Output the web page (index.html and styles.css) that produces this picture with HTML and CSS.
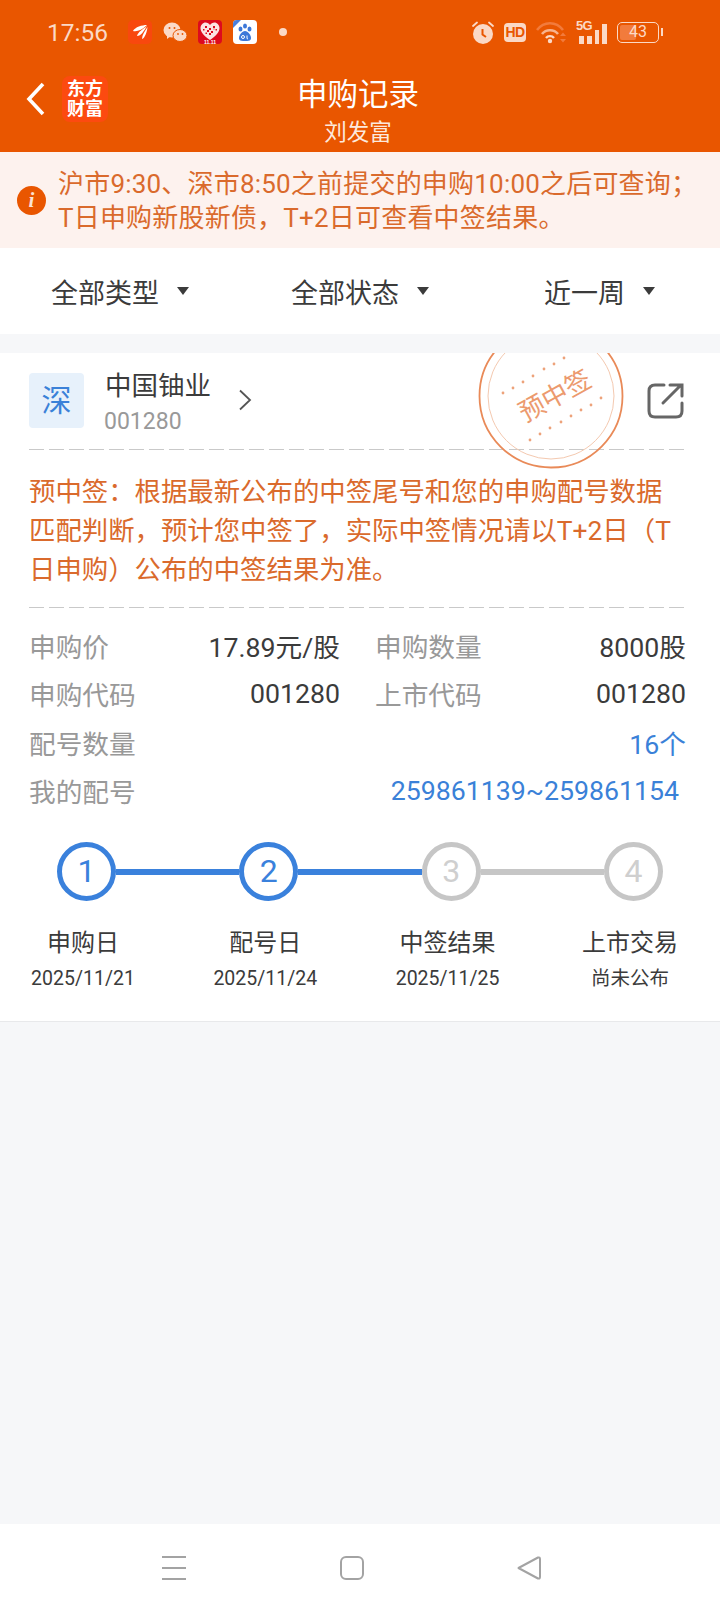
FILE: index.html

```html
<!DOCTYPE html>
<html lang="zh-CN">
<head>
  <meta charset="UTF-8" />
  <meta name="viewport" content="width=device-width, initial-scale=1.0"/>
  <title>申购记录</title>
  <link rel="stylesheet" href="styles.css">
</head>
<body>

  <header class="top">
    <div class="status">
      <span class="time">17:56</span>
      <div class="app-icons">
        <svg class="app" width="24" height="24" viewBox="0 0 24 24">
          <rect width="24" height="24" rx="5" fill="#f8480e"/>
          <path d="M19 5 C14 5 7 7 5 11 C9 12 14 10 19 5Z" fill="#fff"/>
          <path d="M19 6 C15 9 10 12 9 16 C13 16 16 11 19 6Z" fill="#fff"/>
          <path d="M19.500 7 C17 11 14 15 14 19 C17 18 19 12 19.500 7Z" fill="#fff"/>
        </svg>
        <svg class="app" width="24" height="24" viewBox="0 0 24 24">
          <ellipse cx="9" cy="10" rx="8.500" ry="7.500" fill="#fbd9c6"/>
          <path d="M4 15 L4 19 L8 16Z" fill="#fbd9c6"/>
          <ellipse cx="17" cy="15.500" rx="7" ry="6" fill="#fbd9c6" stroke="#e95600" stroke-width="1"/>
          <circle cx="6.500" cy="8" r="1" fill="#e95600"/>
          <circle cx="11.500" cy="8" r="1" fill="#e95600"/>
          <circle cx="15" cy="14" r=".9" fill="#e95600"/>
          <circle cx="19.500" cy="14" r=".9" fill="#e95600"/>
        </svg>
        <svg class="app" width="24" height="24" viewBox="0 0 24 24">
          <rect width="24" height="24" rx="4" fill="#dd0a1e"/>
          <path d="M12 20 C6 16 2.500 12 2.500 8 C2.500 5 5 2.500 7.500 2.500 C9.500 2.500 11 3.500 12 5 C13 3.500 14.500 2.500 16.500 2.500 C19 2.500 21.500 5 21.500 8 C21.500 12 18 16 12 20Z" fill="#fbe3e3"/>
          <path d="M7 6h2v2H7z M11 8h2v2h-2z M15 6h2v2h-2z M9 10h2v2H9z M13 11h2v2h-2z M5 9h1.500v1.500H5z M17.500 9H19v1.500h-1.500z M11 13h2v2h-2z M15.500 8.500h1v1h-1z M7.500 12.500h1.500V14H7.500z" fill="#dd0a1e"/>
          <text x="12" y="23.500" text-anchor="middle" class="heart-text">11.11</text>
        </svg>
        <svg class="app" width="24" height="24" viewBox="0 0 24 24">
          <rect width="24" height="24" rx="4" fill="#fff"/>
          <path d="M0 8 L0 4 Q0 0 4 0 L8 0Z" fill="#4a7fdc"/>
          <ellipse cx="7.500" cy="9" rx="2" ry="2.600" fill="#3d78d8"/>
          <ellipse cx="12" cy="6" rx="2" ry="2.600" fill="#3d78d8"/>
          <ellipse cx="16.500" cy="9" rx="2" ry="2.600" fill="#3d78d8"/>
          <path d="M12 11 C9 11 6 15 6 18 C6 21 9 21 12 21 C15 21 18 21 18 18 C18 15 15 11 12 11Z" fill="#3d78d8"/>
          <circle cx="10" cy="17" r="1.500" fill="none" stroke="#fff" stroke-width="1"/>
          <path d="M14 15.500v2.500q0 1 1 1" fill="none" stroke="#fff" stroke-width="1"/>
        </svg>
        <span class="dot"></span>
      </div>
      <div class="sys-icons">
        <svg width="22" height="23" viewBox="0 0 22 23">
          <circle cx="11" cy="13" r="10" fill="#fbd9c6"/>
          <path d="M1 5 L5 1.500 M21 5 L17 1.500" stroke="#fbd9c6" stroke-width="1.800" stroke-linecap="round"/>
          <path d="M10.500 8 V13.500 L14 16" stroke="#e95600" stroke-width="2" fill="none"/>
        </svg>
        <span class="hd">HD</span>
        <svg width="30" height="23" viewBox="0 0 30 23">
          <path d="M1 9 C8 0 20 0 27 9" stroke="#f27b3c" stroke-width="2.600" fill="none"/>
          <path d="M6 13 C10 8 18 8 22 13" stroke="#f8b48e" stroke-width="2.600" fill="none"/>
          <path d="M10 17 C12 14.500 16 14.500 18 17" stroke="#fbd9c6" stroke-width="2.400" fill="none"/>
          <circle cx="14" cy="20" r="2.200" fill="#fbd9c6"/>
          <path d="M24 15 L27 11.500 L30 15Z M24 18 L27 21.500 L30 18Z" fill="#f27b3c"/>
        </svg>
        <div class="signal">
          <span class="tag-5g">5G</span>
          <span class="bar b1"></span><span class="bar b2"></span><span class="bar b3"></span><span class="bar b4"></span>
        </div>
        <div class="battery"><span class="battery-fill"></span><span class="battery-num">43</span></div>
      </div>
    </div>
    <div class="titlebar">
      <div class="title-left">
        <svg width="20" height="34" viewBox="0 0 20 34" class="back">
          <path d="M17 2 L3 17 L17 32" fill="none" stroke="#fff" stroke-width="3.600"/>
        </svg>
        <div class="logo"><span>东方</span><span>财富</span></div>
      </div>
      <div class="title-mid">
        <div class="title">申购记录</div>
        <div class="subtitle">刘发富</div>
      </div>
    </div>
  </header>

  <div class="notice">
    <span class="notice-icon">i</span>
    <p>沪市9:30、深市8:50之前提交的申购10:00之后可查询；<br>T日申购新股新债，T+2日可查看中签结果。</p>
  </div>

  <div class="filters">
    <div class="filter">全部类型<i class="caret"></i></div>
    <div class="filter">全部状态<i class="caret"></i></div>
    <div class="filter">近一周<i class="caret"></i></div>
  </div>

  <section class="card">
    <svg class="stamp" width="150" height="150" viewBox="0 0 150 150">
      <circle cx="75" cy="75" r="71.500" fill="none" stroke="#e98a58" stroke-width="1.800"/>
      <circle cx="75" cy="75" r="63" fill="none" stroke="#f4c9b0" stroke-width="1"/>
      <g fill="#eda27a">
        <circle cx="27" cy="72" r="1.400"/><circle cx="37" cy="67" r="1.400"/><circle cx="47" cy="61" r="1.400"/>
        <circle cx="57" cy="55" r="1.400"/><circle cx="68" cy="48" r="1.400"/><circle cx="78" cy="43" r="1.400"/>
        <circle cx="88" cy="37" r="1.400"/>
        <circle cx="54" cy="119" r="1.400"/><circle cx="64" cy="113" r="1.400"/><circle cx="74" cy="107" r="1.400"/>
        <circle cx="85" cy="101" r="1.400"/><circle cx="95" cy="95" r="1.400"/><circle cx="105" cy="89" r="1.400"/>
        <circle cx="115" cy="84" r="1.400"/><circle cx="125" cy="77" r="1.400"/>
      </g>
      <text x="79" y="84" text-anchor="middle" transform="rotate(-29 79 75)" class="stamp-text">预中签</text>
    </svg>

    <div class="stock">
      <span class="market">深</span>
      <div class="stock-name">
        <div class="name">中国铀业</div>
        <div class="code">001280</div>
      </div>
      <svg class="chev" width="14" height="22" viewBox="0 0 14 22">
        <path d="M2 1.500 L12 11 L2 20.500" fill="none" stroke="#555" stroke-width="1.800"/>
      </svg>
      <svg class="share" width="38" height="38" viewBox="0 0 38 38">
        <path d="M17 3 H8 Q2 3 2 9 V29 Q2 35 8 35 H29 Q35 35 35 29 V21" fill="none" stroke="#666" stroke-width="3" stroke-linecap="round"/>
        <path d="M16 21 L34 3 M23 3 H35 V14" fill="none" stroke="#666" stroke-width="3" stroke-linecap="round"/>
      </svg>
    </div>

    <div class="dash"></div>
    <p class="tip">预中签：根据最新公布的中签尾号和您的申购配号数据匹配判断，预计您中签了，实际中签情况请以T+2日（T日申购）公布的中签结果为准。</p>
    <div class="dash"></div>

    <div class="info">
      <div class="row"><span>申购价</span><b>17.89元/股</b></div>
      <div class="row"><span>申购数量</span><b>8000股</b></div>
      <div class="row"><span>申购代码</span><b>001280</b></div>
      <div class="row"><span>上市代码</span><b>001280</b></div>
      <div class="row wide"><span>配号数量</span><b class="link">16个</b></div>
      <div class="row wide"><span>我的配号</span><b class="link nums">259861139~259861154</b></div>
    </div>

    <div class="steps">
      <span class="circle on">1</span><span class="line on"></span>
      <span class="circle on">2</span><span class="line on"></span>
      <span class="circle">3</span><span class="line"></span>
      <span class="circle">4</span>
    </div>
    <div class="step-labels">
      <div><div class="step-name">申购日</div><div class="step-date">2025/11/21</div></div>
      <div><div class="step-name">配号日</div><div class="step-date">2025/11/24</div></div>
      <div><div class="step-name">中签结果</div><div class="step-date">2025/11/25</div></div>
      <div><div class="step-name">上市交易</div><div class="step-date">尚未公布</div></div>
    </div>
  </section>

  <div class="spacer"></div>

  <nav class="navbar">
    <svg width="26" height="26" viewBox="0 0 26 26">
      <path d="M1 2 H25 M1 13 H25 M1 24 H25" stroke="#a3a3a3" stroke-width="2"/>
    </svg>
    <svg width="26" height="26" viewBox="0 0 26 26">
      <rect x="2" y="2" width="22" height="22" rx="5" fill="none" stroke="#a3a3a3" stroke-width="2"/>
    </svg>
    <svg width="26" height="26" viewBox="0 0 26 26">
      <path d="M2.500 13 L22 2.500 Q24 2 24 4 V22 Q24 24 22 23.500Z" fill="none" stroke="#a3a3a3" stroke-width="2" stroke-linejoin="round"/>
    </svg>
  </nav>

</body>
</html>
```

FILE: styles.css

```css
* { box-sizing: border-box; }
html, body { margin: 0; padding: 0; }
body {
  width: 720px;
  height: 1612px;
  display: flex;
  flex-direction: column;
  background: #f6f7f9;
  font-family: Roboto, "Noto Sans CJK SC", sans-serif;
  color: #3b3b3b;
  overflow: hidden;
}
p { margin: 0; }

/* orange header */
.top { height: 152px; background: #e95600; flex: none; }
.status {
  height: 64px;
  padding: 0 59px 0 47px;
  display: flex;
  align-items: center;
  color: #fbd9c6;
}
.time { font-size: 24.500px; width: 81px; }
.app-icons { display: flex; align-items: center; gap: 11px; }
.app { display: block; }
.heart-text { font: bold 5px "Liberation Sans", sans-serif; fill: #fff; }
.dot { width: 8px; height: 8px; border-radius: 50%; background: #fbd9c6; margin-left: 11px; }
.sys-icons { margin-left: auto; display: flex; align-items: center; gap: 10px; }
.hd {
  width: 22px;
  height: 19px;
  border-radius: 4px;
  background: #fbd9c6;
  color: #e95600;
  font: bold 14px/19px "Liberation Sans", sans-serif;
  text-align: center;
  letter-spacing: -0.5px;
}
.signal { width: 31px; height: 23px; display: flex; align-items: flex-end; gap: 3px; padding-left: 3px; position: relative; }
.tag-5g { position: absolute; left: 0; top: -2px; font: bold 13px/13px "Liberation Sans", sans-serif; letter-spacing: -0.8px; }
.bar { width: 5px; background: #fbd9c6; }
.b1 { height: 8px; }
.b2 { height: 8px; }
.b3 { height: 14px; }
.b4 { height: 20px; }
.battery {
  width: 42px;
  height: 21px;
  border: 1.500px solid #fbd9c6;
  border-radius: 5px;
  position: relative;
  margin-right: 2px;
}
.battery::after {
  content: "";
  position: absolute;
  right: -5px;
  top: 5px;
  width: 2px;
  height: 8px;
  background: #fbd9c6;
}
.battery-fill { position: absolute; left: 2px; top: 2px; bottom: 2px; width: 16px; background: #f27b3c; border-radius: 2px; }
.battery-num { position: absolute; left: 0; right: 0; top: 0; text-align: center; font-size: 16px; line-height: 18px; }

.titlebar {
  height: 88px;
  display: grid;
  grid-template-columns: 1fr auto 1fr;
  color: #fff;
}
.title-left { display: flex; align-items: center; padding: 0 0 18px 26px; }
.back { display: block; }
.logo {
  width: 46px;
  height: 46px;
  margin-left: 16px;
  border-radius: 8px;
  background: #fc4a10;
  display: flex;
  flex-direction: column;
  align-items: center;
  justify-content: center;
  font-size: 18px;
  line-height: 20px;
  font-weight: bold;
}
.title-mid { text-align: center; padding: 11px 4px 0 0; }
.title { font-size: 30.500px; line-height: 40px; }
.subtitle { font-size: 22.500px; line-height: 30px; margin-top: 2px; color: #fde9dd; }

/* notice */
.notice {
  height: 96px;
  flex: none;
  background: #fdf2ee;
  color: #da6a2c;
  display: flex;
  align-items: center;
  padding: 2px 0 0 17px;
}
.notice-icon {
  width: 29px;
  height: 29px;
  flex: none;
  border-radius: 50%;
  background: #e95600;
  color: #fbe3d5;
  font: italic bold 21px/29px "Liberation Serif", serif;
  text-align: center;
  margin: -2px 12px 0 0;
}
.notice p { font-size: 26px; line-height: 34px; letter-spacing: 0.2px; white-space: nowrap; }

/* filters */
.filters {
  height: 86px;
  flex: none;
  background: #fff;
  display: grid;
  grid-template-columns: 240px 253px auto;
  align-items: center;
  padding-left: 51px;
}
.filter { font-size: 27px; display: flex; align-items: center; color: #3b3b3b; }
.caret {
  margin-left: 18px;
  width: 0;
  height: 0;
  border: 6.500px solid transparent;
  border-top: 8px solid #3b3b3b;
  border-bottom: 0;
}

/* card */
.card {
  margin-top: 19px;
  height: 669px;
  flex: none;
  background: #fff;
  border-bottom: 1px solid #e8e9eb;
  padding: 0 34px 0 29px;
  position: relative;
  overflow: hidden;
}
.stamp { position: absolute; left: 476px; top: -32px; }
.stamp-text { font-size: 26px; fill: #ec9a6e; font-family: "Noto Sans CJK SC", sans-serif; }
.stock { height: 96px; display: flex; align-items: flex-start; position: relative; }
.market {
  margin-top: 20px;
  width: 55px;
  height: 55px;
  flex: none;
  border-radius: 4px;
  background: #e7f1fb;
  color: #3a81d8;
  font-size: 30px;
  line-height: 55px;
  text-align: center;
}
.stock-name { margin: 14px 0 0 20px; }
.name { font-size: 26.500px; line-height: 38px; margin-left: 1px; }
.code { font-size: 23px; line-height: 30px; color: #999; margin-top: 2px; }
.chev { margin: 36px 0 0 27px; }
.share { position: absolute; right: 1px; top: 29px; }
.dash {
  height: 1px;
  background: repeating-linear-gradient(90deg, #c9c9c9 0, #c9c9c9 15px, transparent 15px, transparent 20px);
}
.tip {
  height: 157px;
  padding-top: 23px;
  font-size: 26.400px;
  line-height: 39px;
  color: #da6a2c;
}

.info {
  display: grid;
  grid-template-columns: 311px 311px;
  column-gap: 35px;
  padding-top: 13px;
  position: relative;
}
.row {
  height: 48.500px;
  display: flex;
  justify-content: space-between;
  align-items: center;
  font-size: 26.700px;
}
.row span { color: #999; }
.row b { font-weight: normal; color: #3b3b3b; }
.row.wide { grid-column: 1 / 3; }
.row b.link { color: #3a81d8; }
.row b.nums { margin-right: 7px; }

.steps {
  margin: 27px 0 0 28px;
  width: 606px;
  display: flex;
  align-items: center;
}
.circle {
  width: 59px;
  height: 59px;
  flex: none;
  border: 5px solid #c6c6c6;
  border-radius: 50%;
  color: #cfcfcf;
  font-size: 32px;
  line-height: 49px;
  text-align: center;
}
.circle.on { border-color: #3a81dc; color: #3a81dc; }
.line { flex: 1; height: 6px; background: #c6c6c6; }
.line.on { background: #3a81dc; }

.step-labels {
  margin: 0 -34px 0 -29px;
  padding-top: 24px;
  display: grid;
  grid-template-columns: repeat(4, 166px);
  column-gap: 16.300px;
  text-align: center;
}
.step-name { font-size: 24px; line-height: 36px; color: #3b3b3b; }
.step-date { font-size: 19.500px; line-height: 30px; color: #3b3b3b; margin-top: 3px; }

.spacer { flex: 1; }

.navbar {
  height: 88px;
  flex: none;
  background: #fff;
  display: flex;
  justify-content: space-between;
  padding: 31px 178px 0 161px;
}
.navbar svg { display: block; }
```
